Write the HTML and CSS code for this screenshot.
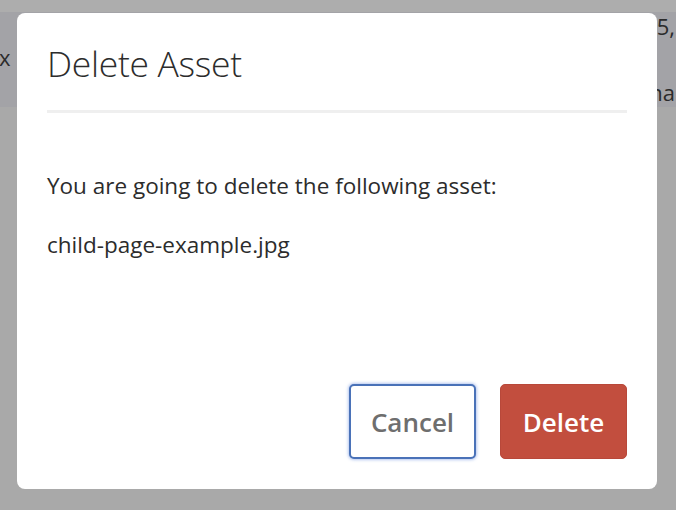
FILE: index.html
```html
<!DOCTYPE html>
<html>
<head>
<meta charset="utf-8">
<link rel="stylesheet" href="styles.css">
</head>
<body>
<div class="page">
  <div class="strip"></div>
  <div class="band">
    <span class="bg-left">x</span>
    <div class="bg-right">
      <span>25,</span>
      <span>rna</span>
    </div>
  </div>
  <div class="rest"></div>
</div>
<div class="dialog">
  <div class="dialog-header">
    <h1 class="dialog-title">Delete Asset</h1>
    <div class="dialog-rule"></div>
  </div>
  <div class="dialog-body">
    <p>You are going to delete the following asset:</p>
    <p>child-page-example.jpg</p>
  </div>
  <div class="dialog-footer">
    <button class="btn btn-cancel">Cancel</button>
    <button class="btn btn-delete">Delete</button>
  </div>
</div>
</body>
</html>
```
FILE: styles.css
```css
html, body {
  margin: 0;
  padding: 0;
  width: 676px;
  height: 510px;
  overflow: hidden;
  font-family: "Open Sans", "Noto Sans", sans-serif;
}
.page {
  display: flex;
  flex-direction: column;
  height: 510px;
  background: #a9a9a9;
}
.strip {
  height: 12px;
  background: #adadad;
}
.band {
  height: 95px;
  background: #a3a3a7;
  display: flex;
  justify-content: space-between;
  color: #2b2b2b;
  font-size: 22px;
  overflow: hidden;
}
.bg-left {
  margin-top: 30px;
  margin-left: -1px;
}
.bg-right {
  display: flex;
  flex-direction: column;
  align-items: flex-end;
  margin-top: -1px;
  margin-right: 1px;
  gap: 36px;
  line-height: 30px;
}
.rest {
  flex: 1;
}
.dialog {
  position: absolute;
  left: 17px;
  top: 13px;
  width: 640px;
  height: 476px;
  background: #fff;
  border-radius: 8px;
  box-sizing: border-box;
  padding: 0 30px 30px;
  display: flex;
  flex-direction: column;
}
.dialog-header {
  padding-top: 28px;
}
.dialog-title {
  margin: 0;
  font-size: 35.5px;
  font-weight: 300;
  color: #2c2c2c;
  line-height: 44px;
  letter-spacing: -0.3px;
}
.dialog-rule {
  margin-top: 25px;
  height: 3px;
  background: #efefef;
}
.dialog-body {
  flex: 1;
  padding-top: 58px;
  color: #2c2c2c;
  font-size: 22.5px;
}
.dialog-body p {
  margin: 0 0 29px;
  line-height: 30px;
}
.dialog-footer {
  display: flex;
  justify-content: flex-end;
  gap: 24px;
}
.btn {
  width: 127px;
  height: 75px;
  border-radius: 5px;
  font-family: "Open Sans", "Noto Sans", sans-serif;
  font-size: 26px;
  font-weight: 600;
  box-sizing: border-box;
}
.btn-cancel {
  background: #fff;
  color: #6e6e6e;
  border: 2px solid #4a72b8;
  box-shadow: 0 0 3px 1px rgba(90, 130, 220, 0.45);
}
.btn-delete {
  background: #c24e3e;
  color: #fff;
  border: 1px solid #b8483a;
}
```
